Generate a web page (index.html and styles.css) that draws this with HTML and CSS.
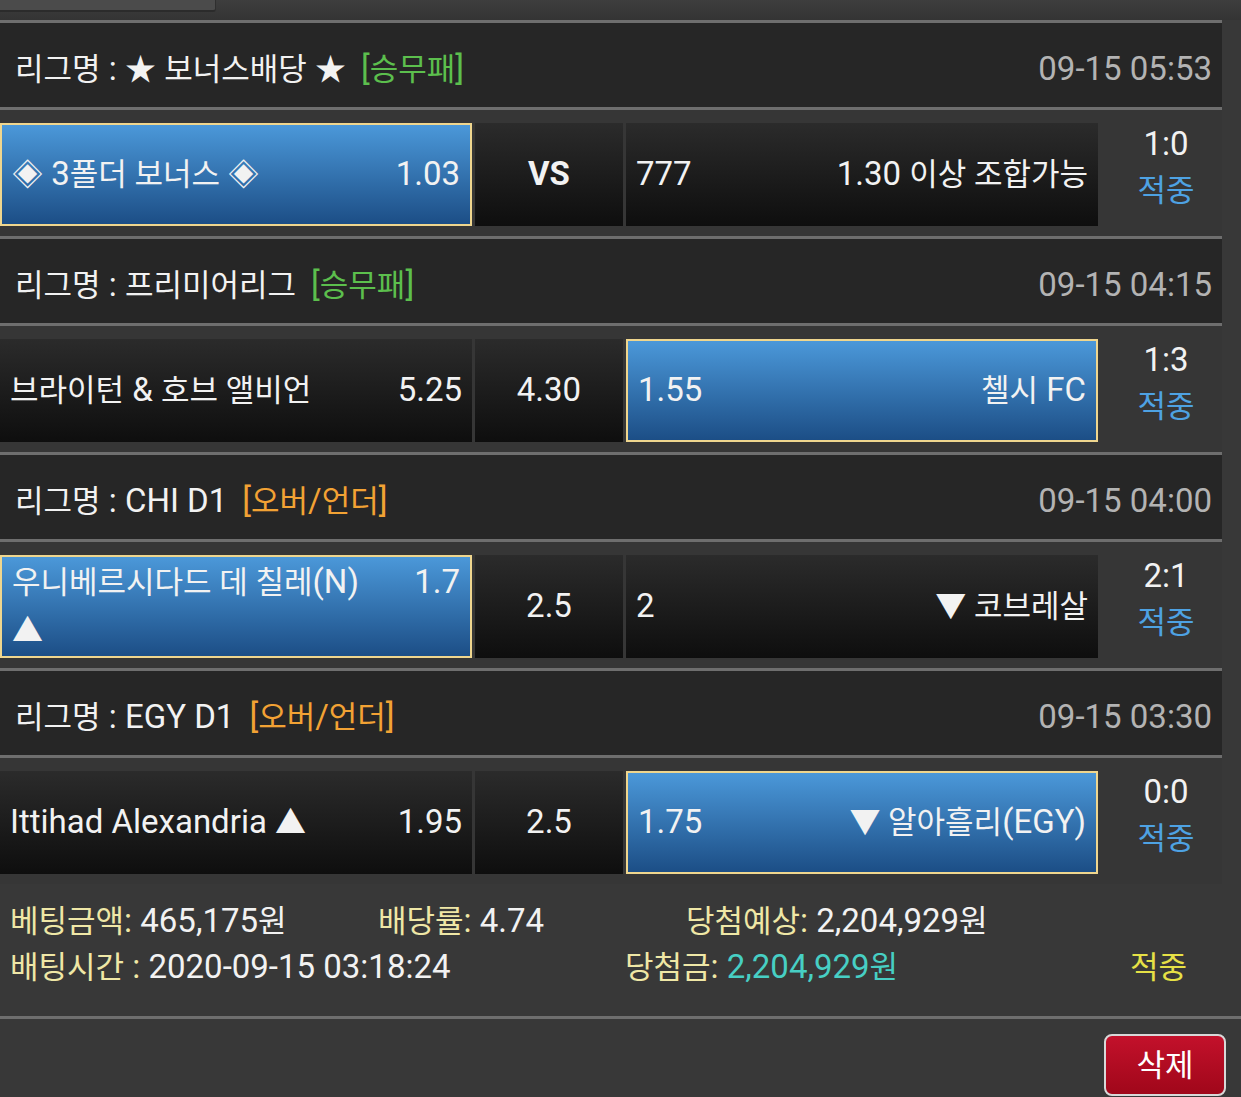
FILE: index.html
```html
<!DOCTYPE html>
<html lang="ko">
<head>
<meta charset="utf-8">
<title>배팅내역</title>
<link rel="stylesheet" href="styles.css">
</head>
<body>
<div class="topbar"><div class="tab"></div></div>

<div class="list">
  <div class="league">
    <div class="league-name"><span class="k">리그명</span> : <span class="k">★</span> <span class="k">보너스배당</span> <span class="k">★</span><span class="tag green">[<span class="k">승무패</span>]</span></div>
    <div class="league-time">09-15 05:53</div>
  </div>
  <div class="match">
    <div class="cell home sel"><div class="inner"><span class="name"><span class="k">◈</span> 3<span class="k">폴더 보너스 ◈</span></span><span class="odds">1.03</span></div></div>
    <div class="cell mid"><b class="vs">VS</b></div>
    <div class="cell away"><div class="inner"><span class="odds">777</span><span class="name">1.30 <span class="k">이상 조합가능</span></span></div></div>
    <div class="score"><span class="sc">1:0</span><span class="k hit">적중</span></div>
  </div>

  <div class="league">
    <div class="league-name"><span class="k">리그명</span> : <span class="k">프리미어리그</span><span class="tag green">[<span class="k">승무패</span>]</span></div>
    <div class="league-time">09-15 04:15</div>
  </div>
  <div class="match">
    <div class="cell home"><div class="inner"><span class="name"><span class="k">브라이턴</span> &amp; <span class="k">호브 앨비언</span></span><span class="odds">5.25</span></div></div>
    <div class="cell mid"><span>4.30</span></div>
    <div class="cell away sel"><div class="inner"><span class="odds">1.55</span><span class="name"><span class="k">첼시</span> FC</span></div></div>
    <div class="score"><span class="sc">1:3</span><span class="k hit">적중</span></div>
  </div>

  <div class="league">
    <div class="league-name"><span class="k">리그명</span> : CHI D1<span class="tag orange">[<span class="k">오버</span>/<span class="k">언더</span>]</span></div>
    <div class="league-time">09-15 04:00</div>
  </div>
  <div class="match">
    <div class="cell home sel"><div class="inner"><span class="name"><span class="k">우니베르시다드 데 칠레</span>(N) <span class="k">▲</span></span><span class="odds">1.7</span></div></div>
    <div class="cell mid"><span>2.5</span></div>
    <div class="cell away"><div class="inner"><span class="odds">2</span><span class="name"><span class="k">▼ 코브레살</span></span></div></div>
    <div class="score"><span class="sc">2:1</span><span class="k hit">적중</span></div>
  </div>

  <div class="league">
    <div class="league-name"><span class="k">리그명</span> : EGY D1<span class="tag orange">[<span class="k">오버</span>/<span class="k">언더</span>]</span></div>
    <div class="league-time">09-15 03:30</div>
  </div>
  <div class="match">
    <div class="cell home"><div class="inner"><span class="name">Ittihad Alexandria <span class="k">▲</span></span><span class="odds">1.95</span></div></div>
    <div class="cell mid"><span>2.5</span></div>
    <div class="cell away sel"><div class="inner"><span class="odds">1.75</span><span class="name"><span class="k">▼ 알아흘리</span>(EGY)</span></div></div>
    <div class="score"><span class="sc">0:0</span><span class="k hit">적중</span></div>
  </div>
</div>

<div class="footer">
  <div class="frow frow1">
    <div><span class="lbl"><span class="k">베팅금액</span>:</span> 465,175<span class="k">원</span></div>
    <div><span class="lbl"><span class="k">배당률</span>:</span> 4.74</div>
    <div><span class="lbl"><span class="k">당첨예상</span>:</span> 2,204,929<span class="k">원</span></div>
  </div>
  <div class="frow frow2">
    <div><span class="lbl"><span class="k">배팅시간</span> :</span> 2020-09-15 03:18:24</div>
    <div><span class="lbl"><span class="k">당첨금</span>:</span> <span class="win">2,204,929<span class="k">원</span></span></div>
    <div><span class="k result">적중</span></div>
  </div>
</div>

<div class="actions">
  <button class="btn-del" type="button"><span class="k">삭제</span></button>
</div>
</body>
</html>
```

FILE: styles.css
```css
* { box-sizing: border-box; }
html, body { margin: 0; padding: 0; }
body {
  width: 1241px;
  height: 1097px;
  overflow: hidden;
  background: #383838;
  color: #f2f2f2;
  font-family: Roboto, "Noto Sans CJK KR", sans-serif;
  font-size: 33px;
  line-height: 47px;
}
.k { font-size: 31px; }

.topbar {
  height: 20px;
  background: linear-gradient(#3e3e3e, #343434);
}
.tab {
  width: 216px;
  height: 12px;
  background: #4b4b4b;
  border-bottom: 2px solid #2b2b2b;
  border-right: 1px solid #2f2f2f;
  border-radius: 0 0 3px 0;
}

.list { width: 1222px; }

.league {
  height: 87px;
  border-top: 3px solid #6e6e6e;
  background: #262626;
  display: flex;
  align-items: center;
  justify-content: space-between;
  padding: 7px 10px 0 15px;
}
.league-time { color: #b3b3b3; }
.tag { margin-left: 15px; }
.green { color: #5cbf4d; }
.orange { color: #f2a234; }

.match {
  display: flex;
  border-top: 3px solid #6e6e6e;
  background: #363636;
  padding: 13px 0 10px;
}
.cell {
  height: 103px;
  display: flex;
  align-items: center;
  padding: 0 10px 2px;
  background: linear-gradient(#2b2b2b, #0e0e0e);
}
.home, .away { width: 472px; }
.mid {
  width: 148px;
  margin: 0 3px;
  justify-content: center;
}
.vs { font-weight: 700; }
.sel {
  background: linear-gradient(#4b98d9, #1c4e86);
  border: 2px solid #efd68e;
}
.inner {
  width: 100%;
  display: flex;
  justify-content: space-between;
  align-items: flex-start;
}
.odds { flex: none; }
.home .odds { padding-left: 30px; }
.away .name { text-align: right; }

.score {
  width: 124px;
  height: 103px;
  padding: 0 0 16px 12px;
  display: flex;
  flex-direction: column;
  align-items: center;
  justify-content: center;
}
.hit { color: #4ea2e3; }

.footer {
  width: 1241px;
  padding: 14px 10px 26px;
  border-bottom: 3px solid #6e6e6e;
  line-height: 45px;
}
.frow { display: grid; }
.frow1 { grid-template-columns: 368px 308px 1fr; }
.frow2 { grid-template-columns: 615px 505px 1fr; }
.lbl { color: #efe7a6; }
.win { color: #47cfc4; }
.result { color: #e6e146; }

.actions {
  display: flex;
  justify-content: flex-end;
  padding: 15px 15px 0 0;
}
.btn-del {
  width: 122px;
  height: 62px;
  padding: 6px 0 0;
  border: 2px solid #d8d8d8;
  border-radius: 8px;
  background: linear-gradient(#c3112b, #a0071a);
  color: #ffffff;
  font-family: inherit;
  line-height: 47px;
}
```
